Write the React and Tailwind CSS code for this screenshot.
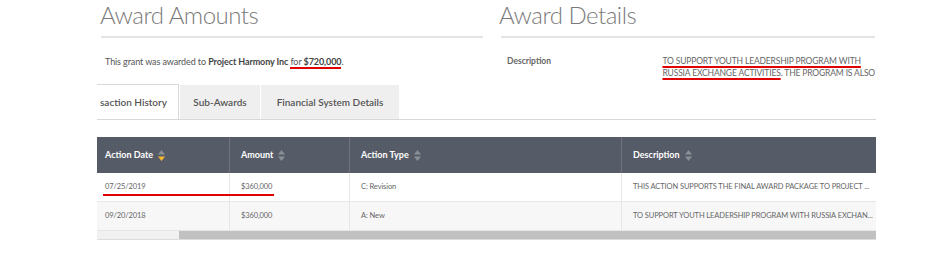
import React from "react";

const font = { fontFamily: "Lato, 'Open Sans', sans-serif" };

function SortIcon({ active }) {
  return (
    <svg width="7" height="11" viewBox="0 0 7 11" className="ml-[5px] inline-block">
      <path d="M3.5 0 L7 4.5 L0 4.5 Z" fill="#8a8f98" />
      <path d="M3.5 11 L7 6.5 L0 6.5 Z" fill={active ? "#f5b82e" : "#8a8f98"} />
    </svg>
  );
}

const rows = [
  ["07/25/2019", "$360,000", "C: Revision", "THIS ACTION SUPPORTS THE FINAL AWARD PACKAGE TO PROJECT ..."],
  ["09/20/2018", "$360,000", "A: New", "TO SUPPORT YOUTH LEADERSHIP PROGRAM WITH RUSSIA EXCHAN..."],
];

export default function App() {
  return (
    <div className="w-[937px] h-[260px] bg-white overflow-hidden text-[#555]" style={font}>
      <div className="ml-[97px] w-[779px] relative">
        {/* top sections */}
        <div className="flex">
          <div className="w-[386px] pl-[3px]">
            <h2 className="text-[24px] tracking-[-0.5px] font-light text-[#7a7a7a] leading-[30px]">Award Amounts</h2>
            <div className="h-[2px] bg-[#e4e4e4] mt-[6px] ml-[1px]" />
            <p className="text-[9px] tracking-[-0.1px] text-[#555] mt-[17px] pl-[5px]">
              This grant was awarded to <b className="text-[#444]">Project Harmony Inc</b>{" "}
              <span className="relative">
                for <b className="text-[#444]">$720,000</b>
                <span className="absolute left-0 right-0 -bottom-[2px] h-[2px] bg-[#e00000]" />
              </span>
              .
            </p>
          </div>
          <div className="w-[374px] ml-[18px]">
            <h2 className="text-[24px] tracking-[-0.5px] font-light text-[#7a7a7a] leading-[30px] -ml-[2px]">Award Details</h2>
            <div className="h-[2px] bg-[#e4e4e4] mt-[6px]" />
            <div className="flex text-[8.5px] mt-[17px] text-[#666]">
              <div className="w-[163px] pl-[6px] font-bold">Description</div>
              <div className="leading-[12px] whitespace-nowrap tracking-[-0.15px]">
                <div>
                  <span className="underline decoration-[#e00000] decoration-2 underline-offset-2">
                    TO SUPPORT YOUTH LEADERSHIP PROGRAM WITH
                  </span>
                </div>
                <div>
                  <span className="underline decoration-[#e00000] decoration-2 underline-offset-2">
                    RUSSIA EXCHANGE ACTIVITIES
                  </span>
                  . THE PROGRAM IS ALSO
                </div>
              </div>
            </div>
          </div>
        </div>

        {/* tabs */}
        <div className="flex mt-[5px] border-b border-[#d8d8d8] text-[10px] font-semibold text-[#555]">
          <div className="h-[35px] w-[82px] flex items-center justify-end pr-[11px] bg-white border-r border-t border-[#d8d8d8] -mb-px overflow-hidden whitespace-nowrap">
            saction History
          </div>
          <div className="h-[34px] w-[80px] flex items-center justify-center bg-[#efefef] ml-[1px] mt-[1px]">Sub-Awards</div>
          <div className="h-[34px] w-[138px] flex items-center justify-center bg-[#efefef] ml-[1px] mt-[1px]">
            Financial System Details
          </div>
        </div>

        {/* table */}
        <div className="mt-[17px] text-[9px]">
          <div className="flex h-[36px] bg-[#565c67] text-white font-bold">
            <div className="w-[133px] flex items-center pl-[8px] border-r border-[#6e737c]">
              Action Date <SortIcon active />
            </div>
            <div className="w-[120px] flex items-center pl-[11px] border-r border-[#6e737c]">
              Amount <SortIcon />
            </div>
            <div className="w-[272px] flex items-center pl-[11px] border-r border-[#6e737c]">
              Action Type <SortIcon />
            </div>
            <div className="flex-1 flex items-center pl-[11px]">
              Description <SortIcon />
            </div>
          </div>
          {rows.map((r, i) => (
            <div
              key={i}
              className={`flex h-[29px] text-[7.5px] tracking-[-0.1px] text-[#666] border-b border-[#e6e6e6] ${i === 1 ? "bg-[#f7f7f7]" : "bg-white"}`}
            >
              <div className="w-[133px] flex items-center pl-[8px] border-r border-[#e6e6e6]">{r[0]}</div>
              <div className="w-[120px] flex items-center pl-[11px] border-r border-[#e6e6e6]">{r[1]}</div>
              <div className="w-[272px] flex items-center pl-[11px] border-r border-[#e6e6e6]">{r[2]}</div>
              <div className="flex-1 flex items-center pl-[11px] whitespace-nowrap overflow-hidden">{r[3]}</div>
            </div>
          ))}
          <div className="flex h-[9px] bg-[#f1f1f1] border-b border-[#dcdcdc]">
            <div className="w-[82px]" />
            <div className="flex-1 bg-[#c1c1c1]" />
          </div>
        </div>

        {/* annotation line under first row */}
        <div className="absolute left-[6px] top-[194px] w-[171px] h-[2px] bg-[#e00000]" />
      </div>
    </div>
  );
}
